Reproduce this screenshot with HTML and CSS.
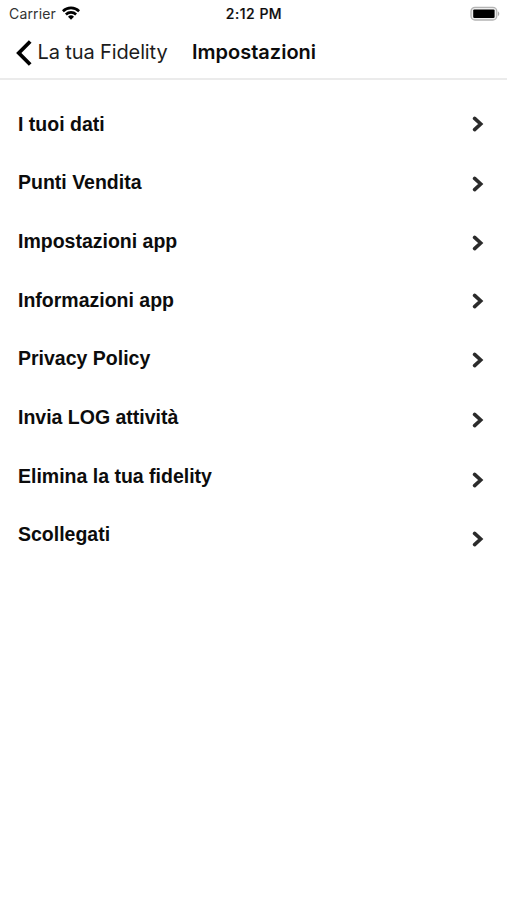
FILE: index.html
```html
<!DOCTYPE html>
<html lang="it">
<head>
<meta charset="utf-8">
<title>Impostazioni</title>
<link rel="stylesheet" href="styles.css">
</head>
<body>
<svg width="0" height="0" class="defs"><symbol id="chev" viewBox="0 0 12 16"><path d="M2.6 2.4 8.7 8 2.6 13.6" fill="none" stroke="#2b2b2b" stroke-width="3.6" stroke-linecap="round"/></symbol></svg>
<div class="status">
  <div class="carrier"><span>Carrier</span>
    <svg class="wifi" width="18" height="14" viewBox="0 0 18 14"><g fill="none" stroke="#000" stroke-width="2.6"><path d="M.9 5.2a11.6 11.6 0 0 1 16.2 0"/><path d="M3.9 8.5a7.3 7.3 0 0 1 10.2 0"/></g><path d="M9 13.8 6 10.8a4.3 4.3 0 0 1 6 0z"/></svg>
  </div>
  <div class="time">2:12 PM</div>
  <svg class="battery" width="32" height="16" viewBox="0 0 32 16"><rect x="2" y="1.4" width="25.8" height="12.6" rx="4" fill="#eee" stroke="#b4b4b4" stroke-width="1.3"/><rect x="4.2" y="3.4" width="21.4" height="8.6" rx="1.2"/><path d="M29 5.2q2.6 2.5 0 5z" fill="#aaa"/></svg>
</div>
<header class="nav">
  <svg class="back" width="18" height="28" viewBox="0 0 18 28"><path d="M15.2 2.5 3.8 14l11.4 11.5" fill="none" stroke="#000" stroke-width="3.8"/></svg>
  <span class="parent">La tua Fidelity</span>
  <h1 class="title">Impostazioni</h1>
</header>
<ul class="menu">
  <li><span>I tuoi dati</span><svg class="chev"><use href="#chev"/></svg></li>
  <li><span>Punti Vendita</span><svg class="chev"><use href="#chev"/></svg></li>
  <li><span>Impostazioni app</span><svg class="chev"><use href="#chev"/></svg></li>
  <li><span>Informazioni app</span><svg class="chev"><use href="#chev"/></svg></li>
  <li><span>Privacy Policy</span><svg class="chev"><use href="#chev"/></svg></li>
  <li><span>Invia LOG attività</span><svg class="chev"><use href="#chev"/></svg></li>
  <li><span>Elimina la tua fidelity</span><svg class="chev"><use href="#chev"/></svg></li>
  <li><span>Scollegati</span><svg class="chev"><use href="#chev"/></svg></li>
</ul>
</body>
</html>
```
FILE: styles.css
```css
* { box-sizing: border-box; }
body { margin: 0; height: 900px; background: #fff; color: #0c0c0c; font-family: Inter, sans-serif; white-space: nowrap; overflow: hidden; }
.defs { display: block; }
.status { display: grid; grid-template-columns: 1fr auto 1fr; height: 27px; padding: 0 6px 0 9px; align-items: center; }
.carrier { display: flex; align-items: center; gap: 6px; font-size: 14px; letter-spacing: 0.15px; color: #333; }
.wifi { margin-top: -2px; }
.time { margin-left: -2px; font-size: 14px; font-weight: 500; letter-spacing: 0.5px; -webkit-text-stroke: 0.2px; }
.battery { justify-self: end; }
.nav { display: flex; align-items: center; height: 53px; padding-left: 15px; border-bottom: 2px solid #ebebeb; }
.parent { margin-left: 4.5px; padding-bottom: 1px; font-size: 20px; letter-spacing: -0.12px; color: #1c1c1c; }
.title { margin: 0 0 0 24.5px; padding-bottom: 1px; font-size: 20px; font-weight: 600; }
.menu { list-style: none; margin: 0; padding: 15px 23px 0 18px; font-family: "Liberation Sans", Arial, sans-serif; font-size: 19.5px; font-weight: 700; }
.menu li { display: flex; align-items: center; justify-content: space-between; height: 58.67px; }
.chev { width: 12px; height: 16px; margin-top: 0; }
.menu li:nth-child(2) .chev, .menu li:nth-child(3) .chev, .menu li:nth-child(4) .chev, .menu li:nth-child(5) .chev { margin-top: 2px; }
.menu li:nth-child(6) .chev { margin-top: 4.5px; }
.menu li:nth-child(7) .chev { margin-top: 7.5px; }
.menu li:nth-child(8) .chev { margin-top: 9px; }
```
